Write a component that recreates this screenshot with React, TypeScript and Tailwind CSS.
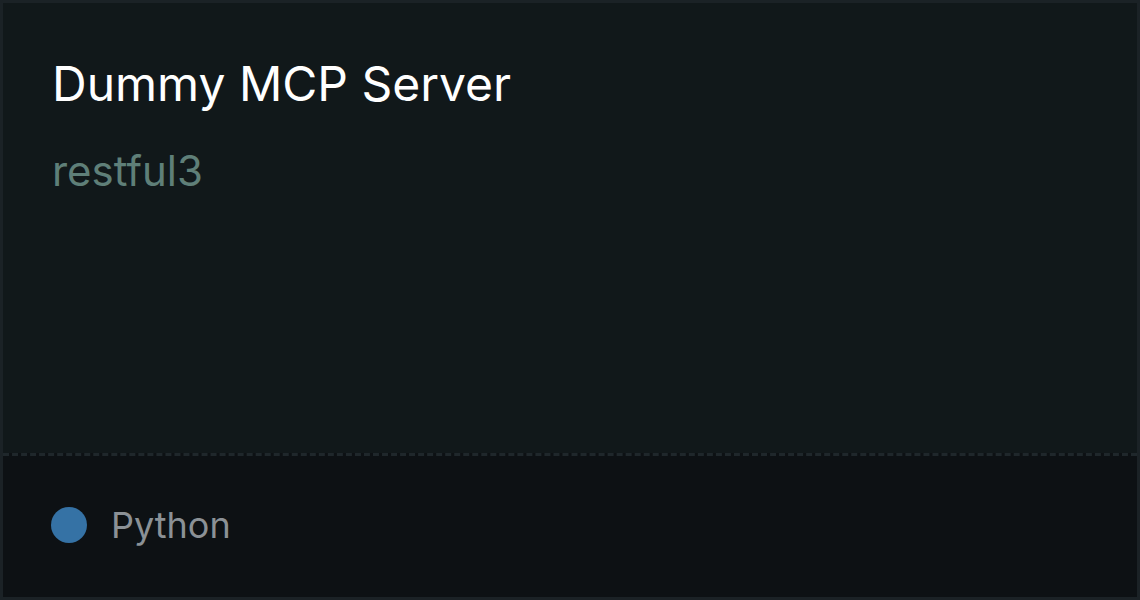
export default function App() {
  return (
    <div className="w-[1140px] h-[600px] bg-[#0d1114] font-['Inter','Noto_Sans',sans-serif]">
      <div className="flex h-full flex-col border-[3px] border-[#1b2226]">
        <div className="flex-1 bg-[#11181a] px-[49px] pt-[49px]">
          <h1 className="text-[48px] leading-[64px] text-white">Dummy MCP Server</h1>
          <p className="mt-[27px] text-[42px] leading-[56px] text-[#5f7f78]">restful3</p>
        </div>
        <div className="flex h-[144px] items-center gap-[24px] border-t-[3px] border-dashed border-[#1f272b] bg-[#0d1114] px-[48px] pb-[3px]">
          <span className="h-[36px] w-[36px] rounded-full bg-[#3572a5]" />
          <span className="text-[36px] leading-[48px] text-[#8b9196]">Python</span>
        </div>
      </div>
    </div>
  );
}
